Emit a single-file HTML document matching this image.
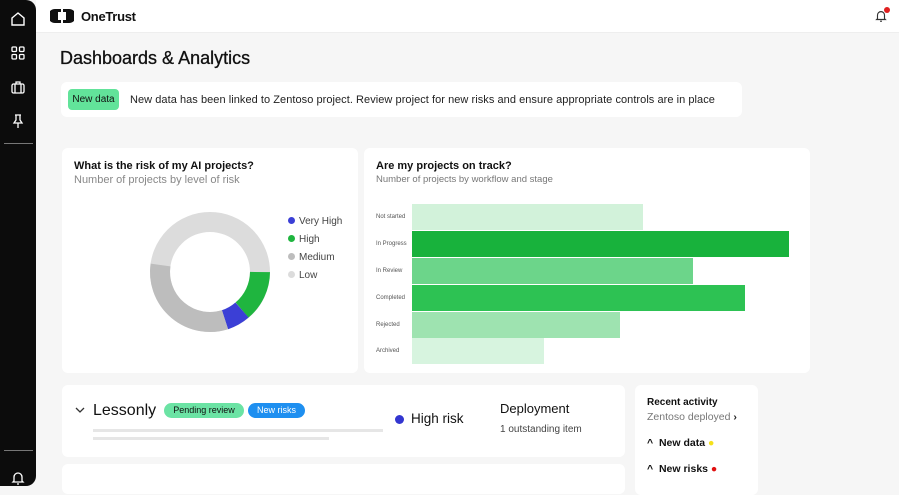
<!DOCTYPE html><html><head><style>
*{margin:0;padding:0;box-sizing:border-box}
body{width:899px;height:486px;overflow:hidden;background:#f6f6f6;font-family:"Liberation Sans",sans-serif;color:#111;position:relative}
.a{position:absolute}
.card{position:absolute;background:#fff;border-radius:6px}
.sb{left:0;top:0;width:36px;height:486px;background:#0c0c0c;border-radius:0 10px 10px 0}
.lbl{position:absolute;font-size:6px;color:#555;left:376px}
.bar{position:absolute;left:412px;height:26px}
.leg{position:absolute;left:288px;font-size:10px;color:#444}
.leg i{display:inline-block;width:7px;height:7px;border-radius:50%;margin-right:4px}
</style></head><body>
<div class="a sb">
<svg class="a" style="left:9px;top:10px" width="18" height="18" viewBox="0 0 18 18" fill="none" stroke="#fff" stroke-width="1.4"><path d="M3 8L9 3l6 5v7H3z"/></svg>
<svg class="a" style="left:10px;top:45px" width="16" height="16" viewBox="0 0 16 16" fill="none" stroke="#fff" stroke-width="1.3"><rect x="2" y="2" width="4.5" height="4.5" rx="1"/><rect x="9.5" y="2" width="4.5" height="4.5" rx="1"/><rect x="2" y="9.5" width="4.5" height="4.5" rx="1"/><rect x="9.5" y="9.5" width="4.5" height="4.5" rx="1"/></svg>
<svg class="a" style="left:9px;top:79px" width="18" height="18" viewBox="0 0 18 18" fill="none" stroke="#fff" stroke-width="1.3"><rect x="3" y="5" width="12" height="9" rx="1.5"/><path d="M7 5V3h4v2M6 5v9M12 5v9"/></svg>
<svg class="a" style="left:10px;top:112px" width="16" height="18" viewBox="0 0 16 18" fill="none" stroke="#fff" stroke-width="1.3"><path d="M5 3h6M6 3v5L4 11h8L10 8V3M8 11v5"/></svg>
<div class="a" style="left:4px;top:143px;width:29px;height:1px;background:#777"></div>
<div class="a" style="left:4px;top:450px;width:29px;height:1px;background:#777"></div>
<svg class="a" style="left:10px;top:470px" width="16" height="16" viewBox="0 0 16 16" fill="none" stroke="#fff" stroke-width="1.3"><path d="M4 11V7a4 4 0 018 0v4l1 1H3zM7 14h2"/></svg>
</div>
<div class="a" style="left:36px;top:0;width:863px;height:33px;background:#fff;border-bottom:1px solid #eee"></div>
<svg class="a" style="left:50px;top:9px" width="24" height="14" viewBox="0 0 24 14"><path d="M5 0h6v14H5A5 5 0 015 0z M13 0h6a5 5 0 010 14h-6z" fill="#111"/><rect x="8" y="3" width="3" height="8" fill="#fff"/><rect x="13" y="3" width="3" height="8" fill="#fff"/></svg>
<div class="a" style="left:81px;top:9px;font-size:13px;font-weight:bold;letter-spacing:-0.3px">OneTrust</div>
<svg class="a" style="left:874px;top:9px" width="14" height="14" viewBox="0 0 16 16" fill="none" stroke="#333" stroke-width="1.3"><path d="M4 11V7a4 4 0 018 0v4l1 1H3zM7 14h2"/></svg>
<div class="a" style="left:884px;top:7px;width:6px;height:6px;border-radius:50%;background:#e02020"></div>
<div class="a" style="left:60px;top:48px;font-size:18px;color:#111;-webkit-text-stroke:0.3px #111">Dashboards &amp; Analytics</div>
<div class="card" style="left:61px;top:82px;width:681px;height:35px"></div>
<div class="a" style="left:68px;top:89px;width:51px;height:21px;background:#62e39a;border-radius:4px;font-size:10px;line-height:21px;text-align:center">New data</div>
<div class="a" style="left:130px;top:94px;font-size:11px;color:#222;letter-spacing:0.05px">New data has been linked to Zentoso project. Review project for new risks and ensure appropriate controls are in place</div>

<div class="card" style="left:62px;top:148px;width:296px;height:225px"></div>
<div class="a" style="left:74px;top:160px;font-size:11px;font-weight:bold">What is the risk of my AI projects?</div>
<div class="a" style="left:74px;top:174px;font-size:11px;color:#888">Number of projects by level of risk</div>
<svg class="a" style="left:148px;top:210px" width="124" height="124" viewBox="-62 -62 124 124" fill="none" stroke-width="20">
<circle r="50" stroke="#dcdcdc"/>
<path d="M50 0A50 50 0 0 1 32 38" stroke="#1fb53f"/>
<path d="M32 38A50 50 0 0 1 15 47.7" stroke="#3b3fd6"/>
<path d="M15 47.7A50 50 0 0 1 -49.5 -7" stroke="#bdbdbd"/>
</svg>
<div class="leg" style="top:216px"><i style="background:#3b3fd6"></i>Very High</div>
<div class="leg" style="top:234px"><i style="background:#1fb53f"></i>High</div>
<div class="leg" style="top:252px"><i style="background:#bdbdbd"></i>Medium</div>
<div class="leg" style="top:270px"><i style="background:#dcdcdc"></i>Low</div>

<div class="card" style="left:364px;top:148px;width:446px;height:225px"></div>
<div class="a" style="left:376px;top:160px;font-size:11px;font-weight:bold">Are my projects on track?</div>
<div class="a" style="left:376px;top:174px;font-size:9.5px;color:#777">Number of projects by workflow and stage</div>
<div class="bar" style="top:204px;width:231px;background:#d2f2da"></div>
<div class="bar" style="top:231px;width:377px;background:#18b23c"></div>
<div class="bar" style="top:258px;width:281px;background:#6cd58a"></div>
<div class="bar" style="top:285px;width:333px;background:#2dc253"></div>
<div class="bar" style="top:312px;width:208px;background:#9ee3b0"></div>
<div class="bar" style="top:338px;width:132px;background:#d7f4df"></div>
<div class="lbl" style="top:214px">Not started</div>
<div class="lbl" style="top:241px">In Progress</div>
<div class="lbl" style="top:268px">In Review</div>
<div class="lbl" style="top:295px">Completed</div>
<div class="lbl" style="top:322px">Rejected</div>
<div class="lbl" style="top:348px">Archived</div>

<div class="card" style="left:62px;top:385px;width:563px;height:72px"></div>
<svg class="a" style="left:75px;top:406px" width="10" height="8" viewBox="0 0 10 8" fill="none" stroke="#333" stroke-width="1.3"><path d="M1 2l4 4 4-4"/></svg>
<div class="a" style="left:93px;top:402px;font-size:16px">Lessonly</div>
<div class="a" style="left:164px;top:403px;width:80px;height:15px;border-radius:8px;background:#6be3a4;font-size:9px;line-height:15px;text-align:center">Pending review</div>
<div class="a" style="left:248px;top:403px;width:57px;height:15px;border-radius:8px;background:#1e8ff0;color:#fff;font-size:9px;line-height:15px;text-align:center">New risks</div>
<div class="a" style="left:93px;top:429px;width:290px;height:3px;background:#e6e6e6"></div>
<div class="a" style="left:93px;top:437px;width:236px;height:3px;background:#e6e6e6"></div>
<div class="a" style="left:395px;top:415px;width:9px;height:9px;border-radius:50%;background:#3336d0"></div>
<div class="a" style="left:411px;top:411px;font-size:13.5px">High risk</div>
<div class="a" style="left:500px;top:401px;font-size:13px">Deployment</div>
<div class="a" style="left:500px;top:424px;font-size:10px;color:#444">1 outstanding item</div>

<div class="card" style="left:62px;top:464px;width:563px;height:30px"></div>
<div class="card" style="left:635px;top:385px;width:123px;height:110px"></div>
<div class="a" style="left:647px;top:397px;font-size:10px;font-weight:bold">Recent activity</div>
<div class="a" style="left:647px;top:411px;font-size:10.5px;color:#777">Zentoso deployed <b style="color:#222">›</b></div>
<div class="a" style="left:647px;top:437px;font-size:10.5px;font-weight:bold">^&nbsp; New data <span style="color:#f5e11a">●</span></div>
<div class="a" style="left:647px;top:463px;font-size:10.5px;font-weight:bold">^&nbsp; New risks <span style="color:#e01010">●</span></div>
</body></html>
